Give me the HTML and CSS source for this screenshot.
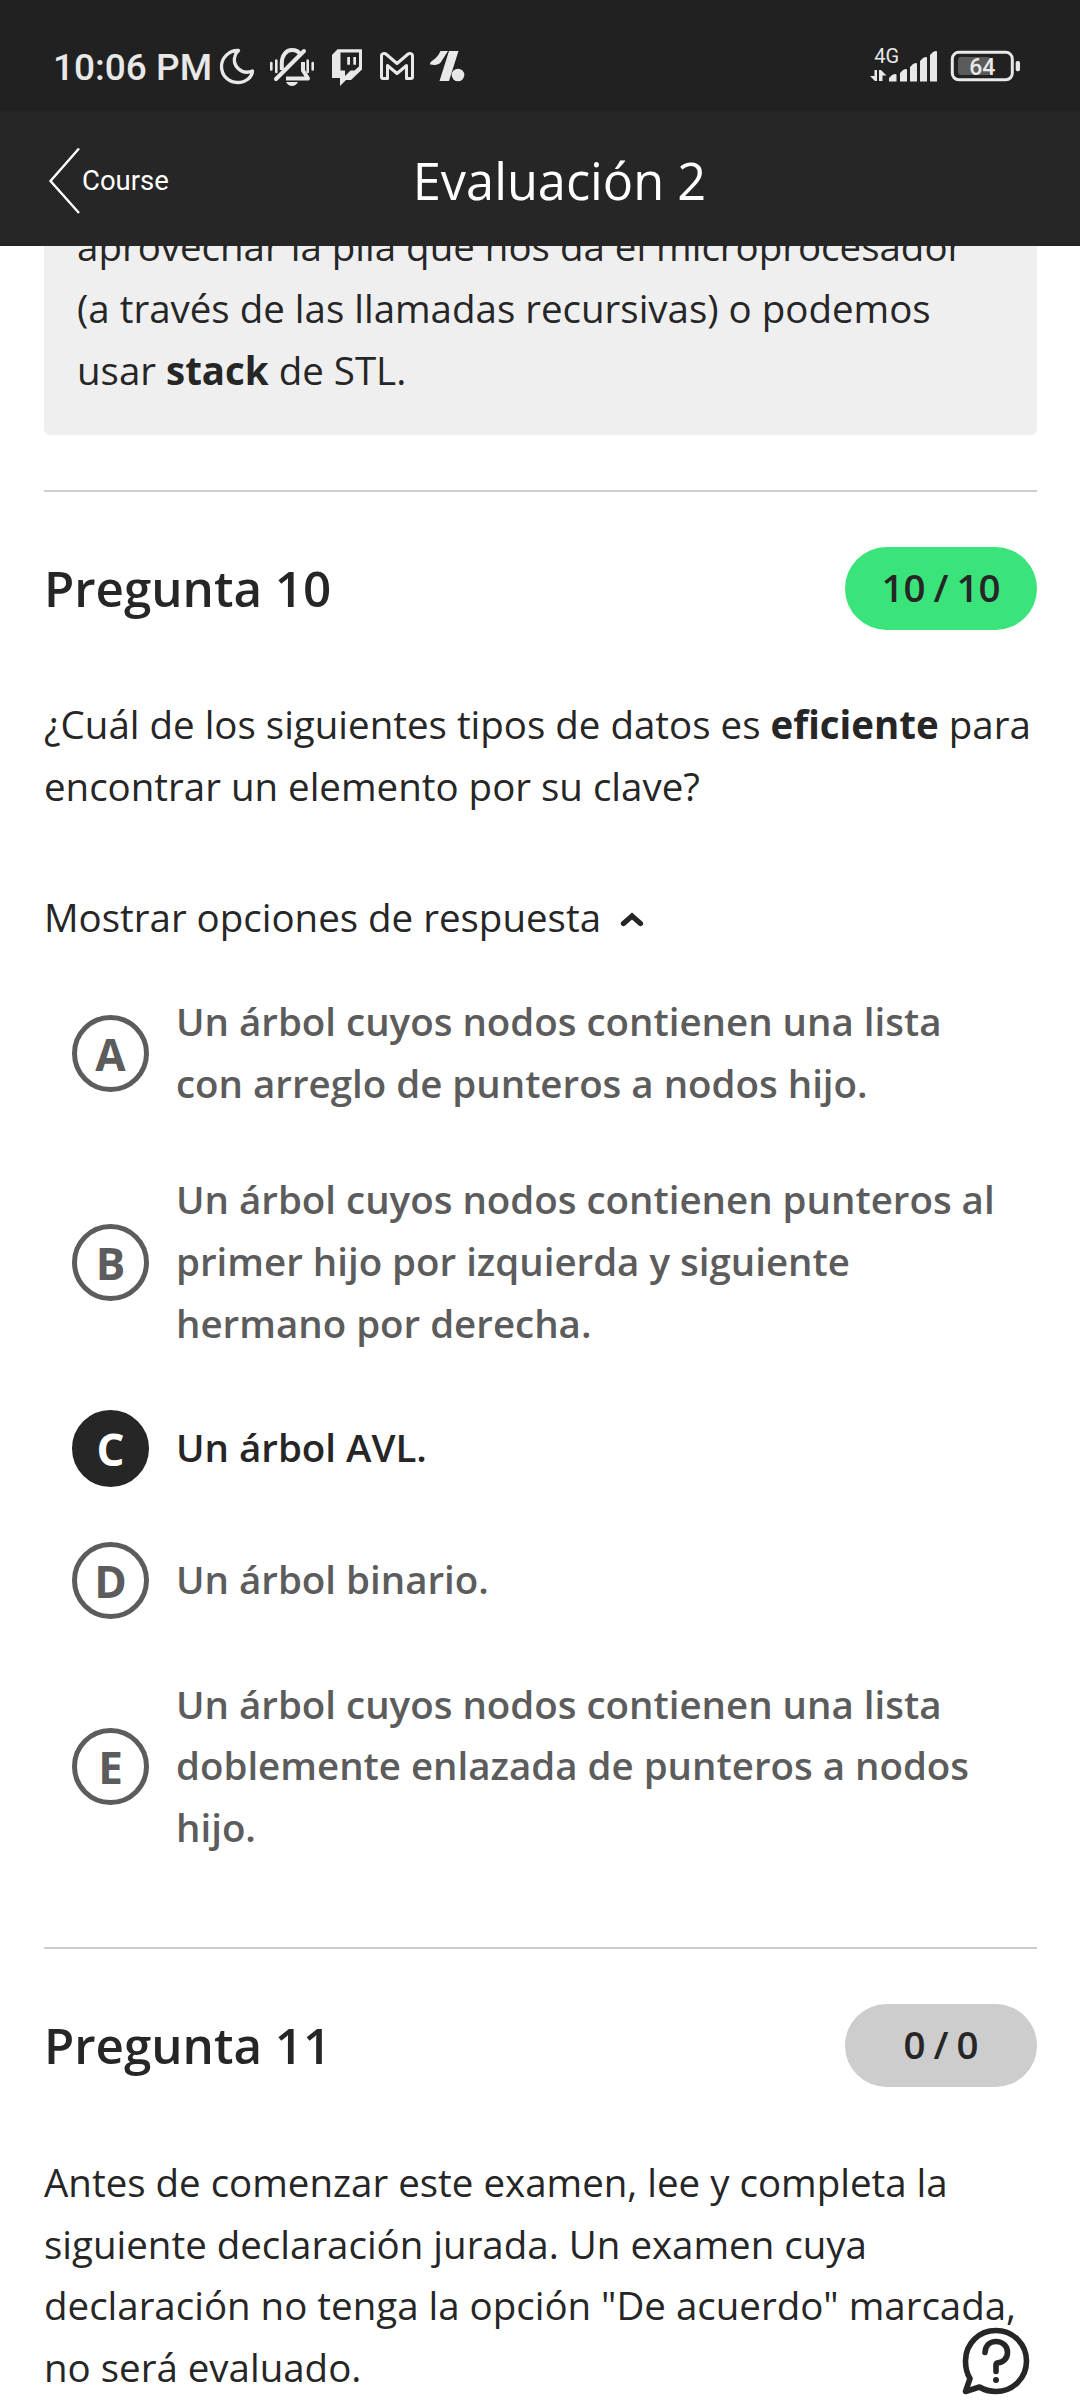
FILE: index.html
```html
<!DOCTYPE html>
<html lang="es">
<head>
<meta charset="utf-8">
<title>Evaluación 2</title>
<link rel="stylesheet" href="styles.css">
</head>
<body>
<div class="status">
  <span class="clock">10:06 PM</span>
  <svg class="notices" width="250" height="44" viewBox="218 44 250 44">
    <path class="line" d="M238.5 50.5C229 50 221.500 58 221.500 66.500C221.500 76 229 82.500 237.500 82.500C245.500 82.500 252 77.500 252.500 71C242 75.500 231 66 235.500 54.500C236.200 52.700 237.500 51.500 238.500 50.500Z"/>
    <path class="line thick" d="M281.800 70V63C281.800 55.500 286 50 292 50C296 50 299 52 300.500 54.500M303 62V70.500L308 78.500H286"/>
    <path class="line thick" d="M276 79L304 51" stroke-linecap="round"/>
    <path class="fill" d="M286 82H298C296.500 84.700 294.500 86 292 86S287.500 84.700 286 82Z"/>
    <path class="line bar" d="M271.300 63V69.500M276.300 60.500V72M307.700 60.500V72M312.700 63V69.500" stroke-linecap="round"/>
    <path class="fill" fill-rule="evenodd" d="M337.500 49.300H362V69.500L351 80H346L340 86V78H332V55ZM340.500 52.500V70.500H345V76L350.500 70.500H354.500L359 66.500V52.500Z"/>
    <path class="fill" d="M347.200 57H350V64.800H347.200ZM353.300 57H356V64.800H353.300Z"/>
    <path class="line mail" d="M381.500 77V56C381.500 53.500 384.500 52.800 386.500 54.500L397 63.500L407.500 54.500C409.500 52.800 412.500 53.500 412.500 56V77C412.500 78 412 78.500 411 78.500H406.500V65.500L397 73.500L387.500 65.500V78.500H383C382 78.500 381.500 78 381.500 77Z"/>
    <path class="fill" d="M440.500 51H448L441 62C438 66 433 65 429.800 64.300C431 59 436 61 440.500 51ZM449 51H458.500L449 81H439.500Z"/>
    <circle class="fill" cx="458" cy="75" r="6.300"/>
  </svg>
  <svg class="signal" width="72" height="42" viewBox="868 42 72 42">
    <text class="net" x="874.300" y="62.700">4G</text>
    <path class="fill" d="M874.500 70H877V81H875L870 76H874.500ZM879 70H881L886.500 75.500H882.500V81H879Z"/>
    <path class="fill" d="M889 78L892 75Q896.500 73 896.500 75V81.500H889ZM900 73L903 70Q907 68 907 70V81.500H900ZM910 67L913 64Q917 62 917 64V81.500H910ZM920 61L923 58Q927 56 927 58V81.500H920ZM930 55L933 52Q937 50 937 52V81.500H930Z"/>
  </svg>
  <svg class="battery" width="72" height="34" viewBox="950 49 72 34">
    <rect class="level" x="958" y="57" width="32.500" height="18" rx="3"/>
    <rect class="line case" x="952.300" y="52.300" width="60" height="27.500" rx="6.500"/>
    <rect class="fill" x="1015.700" y="61" width="4.300" height="10.300" rx="1.800"/>
    <text class="pct" x="969.300" y="75">64</text>
  </svg>
</div>
<header class="topbar">
  <a class="back">
    <svg width="34" height="70" viewBox="47 145 34 70"><path d="M79 147.500L50.500 180L79 212"/></svg>
    <span>Course</span>
  </a>
  <h1>Evaluación 2</h1>
</header>
<main>
  <section class="answer">
    aprovechar la pila que nos da el microprocesador<br>(a través de las llamadas recursivas) o podemos<br>usar <b>stack</b> de STL.
  </section>
  <section class="question">
    <div class="heading"><h2>Pregunta 10</h2><span class="score full">10 / 10</span></div>
    <p>¿Cuál de los siguientes tipos de datos es <b>eficiente</b> para<br>encontrar un elemento por su clave?</p>
    <div class="toggle">Mostrar opciones de respuesta
      <svg width="24" height="16" viewBox="0 0 24 16"><path d="M3.500 11.500L12 4L20.500 11.500"/></svg>
    </div>
    <ul>
      <li><span class="letter">A</span><span class="text">Un árbol cuyos nodos contienen una lista<br>con arreglo de punteros a nodos hijo.</span></li>
      <li><span class="letter">B</span><span class="text">Un árbol cuyos nodos contienen punteros al<br>primer hijo por izquierda y siguiente<br>hermano por derecha.</span></li>
      <li class="chosen"><span class="letter">C</span><span class="text">Un árbol AVL.</span></li>
      <li><span class="letter">D</span><span class="text">Un árbol binario.</span></li>
      <li><span class="letter">E</span><span class="text">Un árbol cuyos nodos contienen una lista<br>doblemente enlazada de punteros a nodos<br>hijo.</span></li>
    </ul>
  </section>
  <section class="question">
    <div class="heading"><h2>Pregunta 11</h2><span class="score">0 / 0</span></div>
    <p>Antes de comenzar este examen, lee y completa la<br>siguiente declaración jurada. Un examen cuya<br>declaración no tenga la opción "De acuerdo" marcada,<br>no será evaluado.</p>
  </section>
</main>
<svg class="help" width="70" height="70" viewBox="961 2326 70 70">
  <path class="bubble" d="M965.500 2391.500L970 2378.500C966.500 2373 965.500 2367 965.500 2361C965.500 2343.500 979 2330.500 996 2330.500S1026.500 2344 1026.500 2361S1013 2391.500 996 2391.500C990 2391.500 984 2389.800 979.500 2387Z"/>
  <path class="mark" d="M985 2352.500C985.500 2345.500 990 2341.500 996 2341.500C1002.500 2341.500 1007.500 2346 1007.500 2352.500C1007.500 2358.500 1003 2362.500 998 2362.800Q996 2363 996 2365V2371.500"/>
  <circle cx="996" cy="2380" r="3"/>
</svg>
</body>
</html>
```
FILE: styles.css
```css
* { box-sizing: border-box; }
body {
  margin: 0;
  width: 1080px;
  height: 2400px;
  overflow: hidden;
  position: relative;
  display: flex;
  flex-direction: column;
  background: #fff;
  color: #262626;
  font: 38.47px/61.7px "Open Sans", sans-serif;
}
.status {
  height: 111px;
  flex: none;
  background: #212121;
  color: #e8e8e8;
  display: flex;
  align-items: flex-start;
  padding-left: 53px;
}
.clock {
  width: 165px;
  margin-top: 46px;
  font: 500 37px/44px Roboto, sans-serif;
  white-space: nowrap;
}
.notices { margin-top: 44px; }
.signal { margin: 42px 10px 0 400px; }
.battery { margin-top: 49px; }
.line { fill: none; stroke: #e8e8e8; stroke-width: 3.3; stroke-linejoin: round; }
.thick { stroke-width: 4; }
.bar { stroke-width: 2.6; }
.mail { stroke-width: 3; }
.case { stroke-width: 3; }
.fill { fill: #e8e8e8; }
.level { fill: #5a5a5a; }
.net { font: 20px Roboto, sans-serif; fill: #e8e8e8; }
.pct { font: 500 23px Roboto, sans-serif; fill: #e8e8e8; }

.topbar {
  height: 135px;
  flex: none;
  background: #262626;
  color: #fff;
  display: grid;
  grid-template-columns: 262px 1fr 220px;
  align-items: center;
  padding: 0 50px 0 47px;
}
.back { display: flex; align-items: center; gap: 1px; font: 27.5px/34px Roboto, sans-serif; padding-top: 4px; }
.back span { padding-top: 1px; }
.back svg { fill: none; stroke: #fff; stroke-width: 2.4; }
h1 { margin: 0; padding-top: 4px; text-align: center; font-size: 50.5px; font-weight: 400; white-space: nowrap; }

main { flex: 1; min-height: 0; overflow: hidden; padding: 0 43px 0 44px; }
.answer {
  margin-top: -29.6px;
  height: 218.6px;
  padding-left: 33px;
  background: #efefef;
  border-radius: 6px;
}
.question { border-top: 2px solid #cdcdcd; padding-top: 55px; }
.answer + .question { margin-top: 55px; }
.heading { display: flex; justify-content: space-between; align-items: center; height: 83px; }
h2 { margin: -1px 0 1px; font-size: 49.3px; font-weight: 600; }
.score {
  width: 192px;
  height: 83px;
  border-radius: 42px;
  background: #cdcdcd;
  text-align: center;
  font-weight: 600;
  line-height: 81px;
  word-spacing: -2px;
}
.full { background: #3ae47a; }
p { margin: 64.4px 0 0; white-space: nowrap; }
.toggle { display: flex; align-items: center; gap: 19px; margin-top: 69.4px; }
.toggle svg { margin-top: 4px; fill: none; stroke: #262626; stroke-width: 5.2; stroke-linecap: round; }
ul { list-style: none; margin: 15.4px 0 0; padding: 0 0 60.5px; }
li { display: flex; align-items: center; padding: 27.5px 0 27.5px 28px; gap: 27px; font-weight: 600; color: #5c5c5c; }
.text { margin: -0.8px 0 0.8px; white-space: nowrap; }
.letter {
  width: 77px;
  height: 77px;
  border: 5px solid;
  border-radius: 50%;
  text-align: center;
  font-size: 44px;
  font-weight: 700;
  line-height: 68px;
}
.chosen { color: #262626; }
.chosen .letter { background: #262626; border-color: #262626; color: #fff; }

.help { position: absolute; left: 961px; top: 2326px; fill: #262626; }
.bubble { fill: #fff; stroke: #262626; stroke-width: 5.6; stroke-linejoin: round; }
.mark { fill: none; stroke: #262626; stroke-width: 5.6; stroke-linecap: round; stroke-linejoin: round; }
```
